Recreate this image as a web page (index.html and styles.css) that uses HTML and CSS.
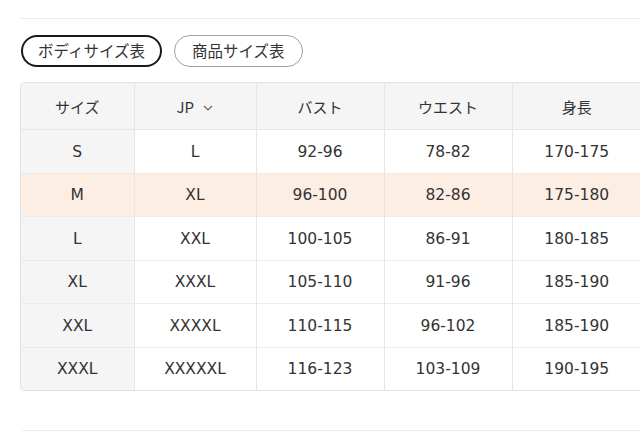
FILE: index.html
```html
<!DOCTYPE html>
<html lang="ja">
<head>
<meta charset="utf-8">
<link rel="stylesheet" href="styles.css">
</head>
<body>
<div class="page">
  <div class="rule"></div>
  <div class="tabs">
    <button class="tab active">ボディサイズ表</button>
    <button class="tab">商品サイズ表</button>
  </div>
  <div class="table-wrap">
    <table class="size-table">
      <colgroup>
        <col style="width:113px"><col style="width:122px"><col style="width:128px"><col style="width:128px"><col style="width:129px">
      </colgroup>
      <thead>
        <tr>
          <th class="first">サイズ</th>
          <th>JP <svg class="chev" width="10" height="6" viewBox="0 0 10 6"><path d="M1 1l4 4 4-4" fill="none" stroke="#666" stroke-width="1.2"/></svg></th>
          <th>バスト</th>
          <th>ウエスト</th>
          <th>身長</th>
        </tr>
      </thead>
      <tbody>
        <tr><td class="first">S</td><td>L</td><td>92-96</td><td>78-82</td><td>170-175</td></tr>
        <tr class="hl"><td class="first">M</td><td>XL</td><td>96-100</td><td>82-86</td><td>175-180</td></tr>
        <tr class="tall"><td class="first">L</td><td>XXL</td><td>100-105</td><td>86-91</td><td>180-185</td></tr>
        <tr><td class="first">XL</td><td>XXXL</td><td>105-110</td><td>91-96</td><td>185-190</td></tr>
        <tr class="tall"><td class="first">XXL</td><td>XXXXL</td><td>110-115</td><td>96-102</td><td>185-190</td></tr>
        <tr><td class="first">XXXL</td><td>XXXXXL</td><td>116-123</td><td>103-109</td><td>190-195</td></tr>
      </tbody>
    </table>
  </div>
  <div class="rule bottom"></div>
</div>
</body>
</html>
```

FILE: styles.css
```css
html, body {
  margin: 0;
  padding: 0;
  background: #fff;
  overflow: hidden;
}
body {
  font-family: "DejaVu Sans", "Noto Sans CJK JP", sans-serif;
  color: #333;
  width: 640px;
  height: 431px;
}
.page {
  padding: 18px 0 0 20px;
  width: 700px;
}
.rule {
  height: 1px;
  background: #eeeeee;
}
.tabs {
  display: flex;
  gap: 12px;
  margin-top: 16px;
  margin-left: 1px;
}
.tab {
  font-family: "Noto Sans CJK JP", sans-serif;
  font-size: 15.5px;
  color: #333;
  background: #fff;
  height: 32px;
  padding: 0 17px;
  border: 1px solid #a0a0a0;
  border-radius: 16px;
  line-height: 1;
}
.tab.active {
  border: 2px solid #1a1a1a;
  padding: 0 15px;
}
.table-wrap {
  margin-top: 15px;
  border: 1px solid #e3e3e3;
  border-radius: 4px;
  overflow: hidden;
  width: 680px;
}
.size-table {
  border-collapse: collapse;
  table-layout: fixed;
  font-size: 15.5px;
}
.size-table th {
  font-family: "Noto Sans CJK JP", sans-serif;
  font-weight: 400;
  font-size: 15px;
  background: #f5f5f5;
  height: 46px;
  padding: 0;
  text-align: center;
  border-left: 1px solid #e6e6e6;
  border-bottom: 1px solid #e6e6e6;
}
.size-table td {
  height: 42px;
  padding: 0;
  text-align: center;
  border-left: 1px solid #e6e6e6;
  border-top: 1px solid #ececec;
}
.size-table tr.tall td { height: 43px; }
.size-table tbody tr:first-child td { border-top: none; height: 43px; }
.size-table .first { border-left: none; background: #f5f5f5; }
.size-table tr.hl td { background: #fdeee3; }
.size-table tr.hl td.first { background: #fdeee3; }
.chev { margin-left: 6px; vertical-align: middle; }
.rule.bottom {
  margin-top: 39px;
  margin-left: 2px;
}
```
